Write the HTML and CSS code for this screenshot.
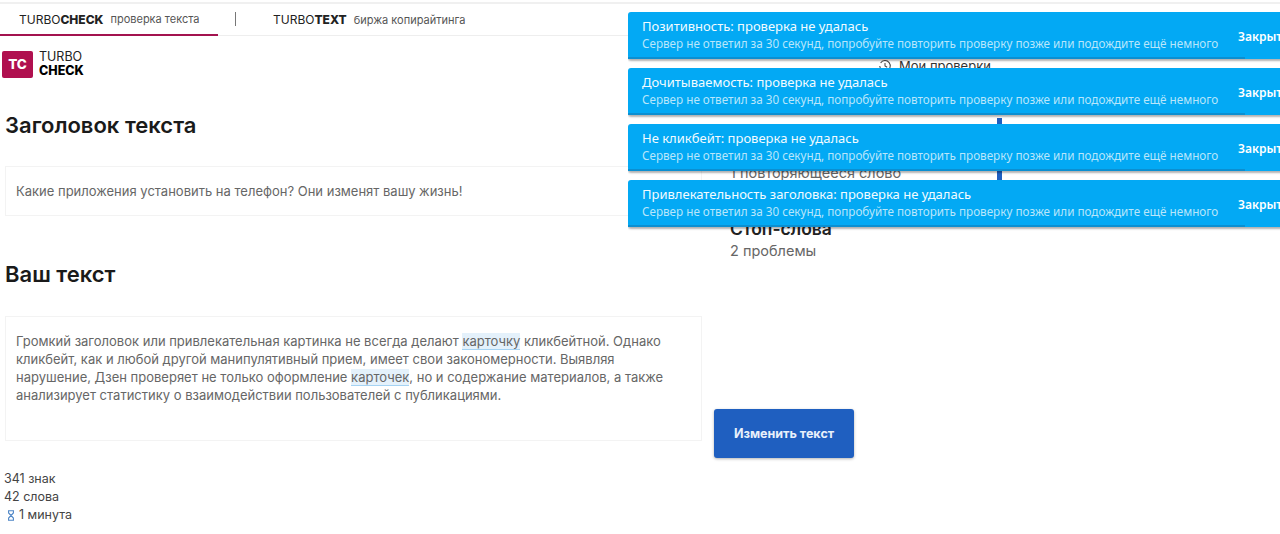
FILE: index.html
```html
<!DOCTYPE html>
<html>
<head>
    <title>TurboCheck</title>
    <meta name="viewport" content="width=device-width, initial-scale=1">
    <link rel="stylesheet" href="styles.css">
</head>
<body>
    <div class="service-bar">
        <div class="service-tab service-tab-active">
            <span class="service-name">TURBO<b>CHECK</b></span>
            <span class="service-note">проверка текста</span>
        </div>
        <div class="service-divider"></div>
        <div class="service-tab">
            <span class="service-name">TURBO<b>TEXT</b></span>
            <span class="service-note">биржа копирайтинга</span>
        </div>
    </div>

    <div class="logo-row">
        <div class="logo">
            <div class="logo-mark">TC</div>
            <div class="logo-text">TURBO<br><b>CHECK</b></div>
        </div>
        <div class="my-checks">
            <svg class="my-checks-icon" viewBox="0 0 16 16" width="14" height="14">
                <path d="M3 4.5A6 6 0 1 1 2 8" fill="none" stroke="#444" stroke-width="1.2"/>
                <path d="M8 4.5V8l2.5 1.5" fill="none" stroke="#444" stroke-width="1.2"/>
            </svg>
            Мои проверки
        </div>
    </div>

    <div class="content">
        <div class="editor">
            <h2 class="section-title">Заголовок текста</h2>
            <div class="text-box title-box">Какие приложения установить на телефон? Они изменят вашу жизнь!</div>

            <h2 class="section-title body-title">Ваш текст</h2>
            <div class="text-box body-box">
                Громкий заголовок или привлекательная картинка не всегда делают <span class="mark">карточку</span> кликбейтной. Однако кликбейт, как и любой другой манипулятивный прием, имеет свои закономерности. Выявляя нарушение, Дзен проверяет не только оформление <span class="mark">карточек</span>, но и содержание материалов, а также анализирует статистику о взаимодействии пользователей с публикациями.
            </div>

            <div class="stats">
                <div>341 знак</div>
                <div>42 слова</div>
                <div class="stats-time">
                    <svg viewBox="0 0 8 11" width="8" height="11">
                        <path d="M1 .8h6M1 10.2h6M1.6 1v2L6.4 8v2M6.4 1v2L1.6 8v2" fill="none" stroke="#4f86c6" stroke-width="1.1"/>
                    </svg>
                    1 минута
                </div>
            </div>
        </div>

        <div class="results">
            <div class="result-list">
                <div class="result-bar"></div>
                <div class="result-line">1 повторяющееся слово</div>
                <div class="result-title">Стоп-слова</div>
                <div class="result-line">2 проблемы</div>
            </div>
            <button class="edit-button">Изменить текст</button>
        </div>
    </div>

    <div class="toasts">
        <div class="toast">
            <div class="toast-body">
                <div class="toast-title">Позитивность: проверка не удалась</div>
                <div class="toast-text">Сервер не ответил за 30 секунд, попробуйте повторить проверку позже или подождите ещё немного</div>
            </div>
            <div class="toast-close">Закрыть</div>
            <div class="toast-progress"></div>
        </div>
        <div class="toast">
            <div class="toast-body">
                <div class="toast-title">Дочитываемость: проверка не удалась</div>
                <div class="toast-text">Сервер не ответил за 30 секунд, попробуйте повторить проверку позже или подождите ещё немного</div>
            </div>
            <div class="toast-close">Закрыть</div>
            <div class="toast-progress"></div>
        </div>
        <div class="toast">
            <div class="toast-body">
                <div class="toast-title">Не кликбейт: проверка не удалась</div>
                <div class="toast-text">Сервер не ответил за 30 секунд, попробуйте повторить проверку позже или подождите ещё немного</div>
            </div>
            <div class="toast-close">Закрыть</div>
            <div class="toast-progress"></div>
        </div>
        <div class="toast">
            <div class="toast-body">
                <div class="toast-title">Привлекательность заголовка: проверка не удалась</div>
                <div class="toast-text">Сервер не ответил за 30 секунд, попробуйте повторить проверку позже или подождите ещё немного</div>
            </div>
            <div class="toast-close">Закрыть</div>
            <div class="toast-progress"></div>
        </div>
    </div>
</body>
</html>
```

FILE: styles.css
```css
html, body {
    height: 534px;
    overflow: hidden;
}
body {
    margin: 0;
    padding-top: 2px;
    box-sizing: border-box;
    background-color: #fff;
    color: #333;
    font-family: "Inter", "Liberation Sans", sans-serif;
    font-size: 13px;
    position: relative;
}
.service-bar {
    display: flex;
    align-items: stretch;
    height: 31px;
    border-top: 2px solid #f0f0f0;
    border-bottom: 1px solid #eee;
}
.service-tab {
    display: flex;
    align-items: center;
    gap: 7px;
    padding: 0 0 0 19px;
    font-size: 12px;
    color: #222;
}
.service-tab-active {
    width: 199px;
    height: 30px;
    border-bottom: 2px solid #a3134f;
    margin-bottom: -1px;
}
.service-name b {
    font-weight: 800;
}
.service-note {
    color: #555;
    font-size: 11px;
}
.service-divider {
    width: 1px;
    height: 14px;
    margin: 8px 18px 0 17px;
    background-color: #777;
}
.logo-row {
    display: flex;
    height: 59px;
    padding: 14px 0 0 2px;
    box-sizing: border-box;
    position: relative;
}
.logo {
    display: flex;
    align-items: center;
    gap: 6px;
    height: 28px;
}
.logo-mark {
    width: 31px;
    height: 27px;
    border-radius: 2px;
    background-color: #b0104f;
    color: #fff;
    font-size: 13.5px;
    font-weight: 800;
    line-height: 27px;
    text-align: center;
}
.logo-text {
    font-size: 12.5px;
    line-height: 14px;
    color: #222;
}
.logo-text b {
    color: #000;
    font-size: 12.5px;
    font-weight: 800;
}
.my-checks {
    position: absolute;
    left: 878px;
    top: 22px;
    display: flex;
    align-items: center;
    gap: 7px;
    color: #333;
    font-size: 13px;
}
.content {
    display: flex;
}
.editor {
    width: 697px;
    margin-left: 5px;
}
.section-title {
    margin: 0;
    font-size: 22px;
    font-weight: 600;
    line-height: 28px;
    color: #1a1a1a;
}
.section-title:first-child {
    margin-top: 16px;
}
.body-title {
    margin-top: 44px;
}
.text-box {
    box-sizing: border-box;
    border: 1px solid #f3f3f3;
    padding: 15px 10px;
    color: #666;
    line-height: 18px;
}
.title-box {
    height: 50px;
    margin-top: 27px;
}
.body-box {
    height: 125px;
    margin-top: 28px;
}
.mark {
    background-color: #e4f1fb;
    border-bottom: 1px solid #a5d3f3;
}
.stats {
    margin-top: 29px;
    margin-left: -1px;
    font-size: 12.5px;
    line-height: 18px;
    color: #444;
}
.stats-time {
    display: flex;
    align-items: center;
    gap: 4px;
    padding-left: 3px;
}
.results {
    position: relative;
    flex: 1;
    margin-left: 12px;
}
.result-list {
    margin-left: 16px;
    padding-top: 68px;
}
.result-bar {
    position: absolute;
    left: 283px;
    top: 23px;
    width: 5px;
    height: 62px;
    background-color: #1f5fc0;
}
.result-line {
    color: #666;
    font-size: 14.5px;
    line-height: 20px;
}
.result-title {
    margin-top: 34px;
    color: #222;
    font-size: 17.5px;
    font-weight: 600;
    line-height: 24px;
}
.edit-button {
    position: absolute;
    left: 0;
    top: 314px;
    width: 140px;
    height: 49px;
    border: none;
    border-radius: 3px;
    background-color: #1f5fc0;
    box-shadow: 0 1px 3px rgba(0,0,0,0.3);
    color: #e8f0fb;
    font-family: inherit;
    font-size: 12.5px;
    font-weight: 700;
}
.toasts {
    position: absolute;
    left: 628px;
    top: 12px;
    width: 652px;
    overflow: hidden;
    padding-bottom: 4px;
    display: flex;
    flex-direction: column;
    gap: 9px;
}
.toast {
    position: relative;
    display: flex;
    width: 680px;
    height: 47px;
    box-sizing: border-box;
    padding: 6px 0 0 14px;
    border-radius: 3px 0 0 3px;
    background-color: #03a9f4;
    box-shadow: 0 2px 2px rgba(0,0,0,0.3);
    font-family: "Noto Sans", sans-serif;
}
.toast-body {
    width: 596px;
}
.toast-title {
    color: #f2fbff;
    font-size: 13px;
    line-height: 17px;
}
.toast-text {
    color: #b9e6fb;
    font-size: 11.7px;
    line-height: 16px;
}
.toast-close {
    padding-top: 10px;
    color: #fff;
    font-size: 12px;
    font-weight: 600;
}
.toast-progress {
    position: absolute;
    left: 0;
    bottom: 0;
    width: 617px;
    height: 2px;
    background-color: #0b8fd1;
}
```
